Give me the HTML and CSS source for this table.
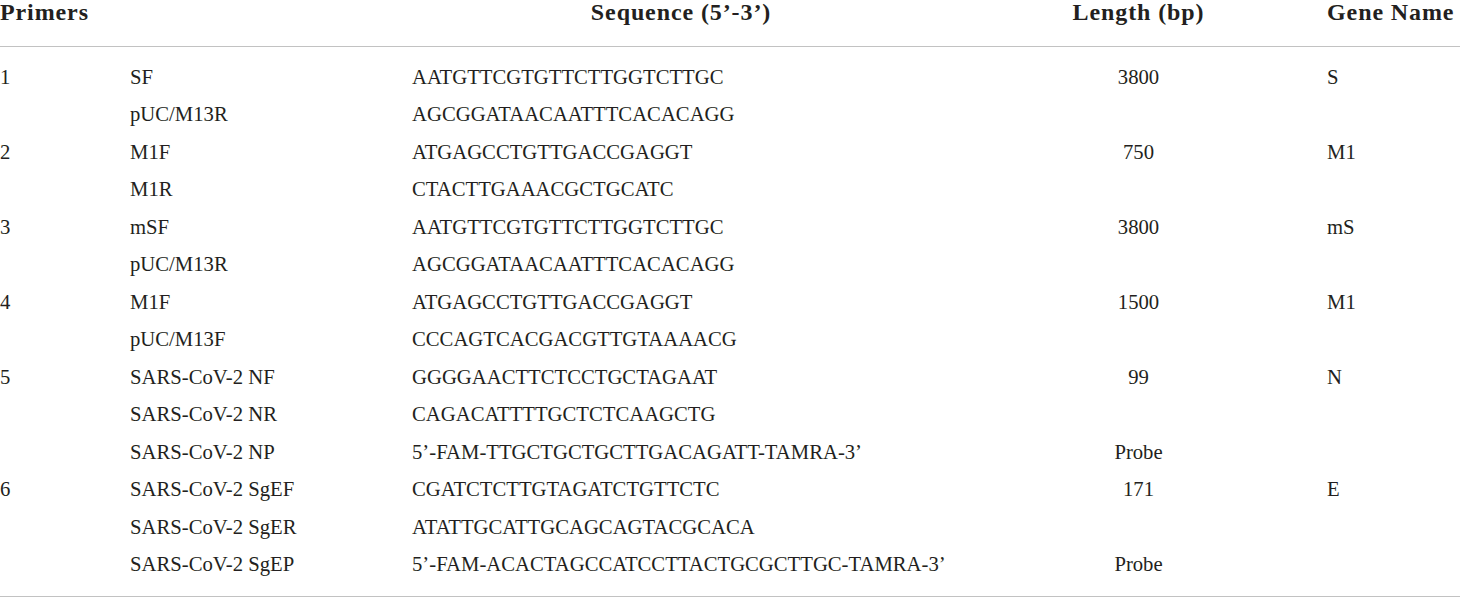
FILE: index.html
```html
<!DOCTYPE html>
<html lang="en">
<head>
<meta charset="utf-8">
<title>Primers</title>
<link rel="stylesheet" href="styles.css">
</head>
<body>
<table class="primers">
  <colgroup>
    <col class="c-num">
    <col class="c-name">
    <col class="c-seq">
    <col class="c-len">
    <col class="c-gene">
  </colgroup>
  <thead>
    <tr>
      <th class="left" colspan="2">Primers</th>
      <th class="center">Sequence (5’-3’)</th>
      <th class="center">Length (bp)</th>
      <th class="left">Gene Name</th>
    </tr>
  </thead>
  <tbody>
    <tr class="first"><td>1</td><td>SF</td><td>AATGTTCGTGTTCTTGGTCTTGC</td><td class="center">3800</td><td>S</td></tr>
    <tr><td></td><td>pUC/M13R</td><td>AGCGGATAACAATTTCACACAGG</td><td></td><td></td></tr>
    <tr><td>2</td><td>M1F</td><td>ATGAGCCTGTTGACCGAGGT</td><td class="center">750</td><td>M1</td></tr>
    <tr><td></td><td>M1R</td><td>CTACTTGAAACGCTGCATC</td><td></td><td></td></tr>
    <tr><td>3</td><td>mSF</td><td>AATGTTCGTGTTCTTGGTCTTGC</td><td class="center">3800</td><td>mS</td></tr>
    <tr><td></td><td>pUC/M13R</td><td>AGCGGATAACAATTTCACACAGG</td><td></td><td></td></tr>
    <tr><td>4</td><td>M1F</td><td>ATGAGCCTGTTGACCGAGGT</td><td class="center">1500</td><td>M1</td></tr>
    <tr><td></td><td>pUC/M13F</td><td>CCCAGTCACGACGTTGTAAAACG</td><td></td><td></td></tr>
    <tr><td>5</td><td>SARS-CoV-2 NF</td><td>GGGGAACTTCTCCTGCTAGAAT</td><td class="center">99</td><td>N</td></tr>
    <tr><td></td><td>SARS-CoV-2 NR</td><td>CAGACATTTTGCTCTCAAGCTG</td><td></td><td></td></tr>
    <tr><td></td><td>SARS-CoV-2 NP</td><td>5’-FAM-TTGCTGCTGCTTGACAGATT-TAMRA-3’</td><td class="center">Probe</td><td></td></tr>
    <tr><td>6</td><td>SARS-CoV-2 SgEF</td><td>CGATCTCTTGTAGATCTGTTCTC</td><td class="center">171</td><td>E</td></tr>
    <tr><td></td><td>SARS-CoV-2 SgER</td><td>ATATTGCATTGCAGCAGTACGCACA</td><td></td><td></td></tr>
    <tr class="last"><td></td><td>SARS-CoV-2 SgEP</td><td>5’-FAM-ACACTAGCCATCCTTACTGCGCTTGC-TAMRA-3’</td><td class="center">Probe</td><td></td></tr>
  </tbody>
</table>
</body>
</html>
```
FILE: styles.css
```css
html, body {
  margin: 0;
  padding: 0;
  background: #ffffff;
  overflow: hidden;
}

body {
  width: 1460px;
  height: 599px;
  font-family: "Liberation Serif", "Times New Roman", serif;
  color: #231f20;
}

.primers {
  border-collapse: collapse;
  table-layout: fixed;
  width: 1520px;
  border-bottom: 1px solid #c2c2c2;
}

.c-num { width: 130px; }
.c-name { width: 282px; }
.c-seq { width: 538px; }
.c-len { width: 377px; }
.c-gene { width: 193px; }

.primers th {
  font-size: 24px;
  font-weight: bold;
  letter-spacing: 0.9px;
  line-height: 24px;
  height: 46px;
  padding: 0;
  vertical-align: top;
  white-space: nowrap;
  border-bottom: 1px solid #c2c2c2;
  box-sizing: border-box;
}

.primers td {
  font-size: 20.7px;
  letter-spacing: 0;
  line-height: 37.5px;
  height: 37.5px;
  padding: 0;
  vertical-align: top;
  white-space: nowrap;
  text-align: left;
}

.primers tr.first td {
  padding-top: 12px;
}

.primers tr.last td {
  padding-bottom: 12.5px;
}

.left { text-align: left; }
.primers .center { text-align: center; }
```
